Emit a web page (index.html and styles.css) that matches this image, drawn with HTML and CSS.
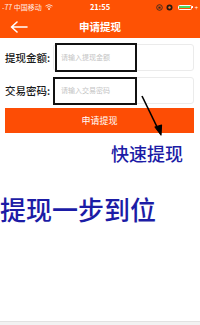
FILE: index.html
```html
<!DOCTYPE html>
<html>
<head>
<meta charset="utf-8">
<link rel="stylesheet" href="styles.css">
</head>
<body>
<div class="header">
  <div class="status">
    <div class="st-left">-77 中国移动 <svg class="wifi" width="8" height="6" viewBox="0 0 8 6"><path d="M0.5 2 Q4 -0.8 7.5 2" stroke="#fff" stroke-width="1" fill="none" opacity="0.85"/><path d="M1.8 3.4 Q4 1.6 6.2 3.4" stroke="#fff" stroke-width="1" fill="none" opacity="0.85"/><circle cx="4" cy="5" r="0.9" fill="#fff"/></svg></div>
    <div class="st-time">21:55</div>
    <div class="st-right">
      <svg width="7" height="7" viewBox="0 0 7 7"><circle cx="3.5" cy="3.5" r="2.8" fill="none" stroke="#3a2a20" stroke-width="0.9"/><rect x="2.4" y="2.6" width="2.2" height="2" fill="#3a2a20"/></svg>
      <svg width="7" height="7" viewBox="0 0 7 7"><circle cx="3.5" cy="3.5" r="3" fill="#2a1a10"/><circle cx="3.5" cy="3.5" r="1.2" fill="#ff6a20"/></svg>
      <div class="battery"><div class="bat-fill"></div></div><div class="bat-nub"></div>
      <span class="plus">+</span>
    </div>
  </div>
  <div class="nav">
    <svg class="back" width="18" height="12" viewBox="0 0 18 12"><path d="M17 6 H2 M7 1 L1.5 6 L7 11" stroke="#fff" stroke-width="1.6" fill="none" stroke-linecap="round" stroke-linejoin="round"/></svg>
    <div class="title">申请提现</div>
  </div>
</div>
<div class="form">
  <div class="row">
    <div class="label">提现金额:</div>
    <div class="input"><span class="ph">请输入提现金额</span><div class="mark"></div></div>
  </div>
  <div class="row">
    <div class="label">交易密码:</div>
    <div class="input"><span class="ph">请输入交易密码</span><div class="mark"></div></div>
  </div>
  <div class="btn">申请提现</div>
  <svg class="arrow" width="30" height="46" viewBox="0 0 30 46"><path d="M3 1 L20 36" stroke="#000" stroke-width="1.6"/><path d="M16 32 L22 40 L22.5 30 Z" fill="#000" stroke="#000" stroke-width="1.2" stroke-linejoin="round"/></svg>
  <div class="note1">快速提现</div>
</div>
<div class="note2">提现一步到位</div>
<div class="bottom"></div>
</body>
</html>
```
FILE: styles.css
```css
* { box-sizing: border-box; }
html, body { margin: 0; padding: 0; }
body {
  width: 200px; height: 325px; background: #fff; overflow: hidden;
  font-family: "Noto Sans CJK SC", "Noto Sans", sans-serif;
  display: flex; flex-direction: column; position: relative;
}
.header { background: #fe5204; height: 38px; display: flex; flex-direction: column; }
.status { height: 14px; display: flex; align-items: center; justify-content: space-between; padding: 0 2px 0 2px; color: #fff; font-size: 7px; position: relative; }
.st-left { display: flex; align-items: center; gap: 1px; opacity: 0.9; line-height: 1; }
.wifi { margin-left: 2px; }
.st-time { position: absolute; left: 0; right: 0; text-align: center; font-weight: bold; font-size: 7.5px; line-height: 14px; color: #fff; }
.st-right { display: flex; align-items: center; gap: 3px; }
.battery { width: 14px; height: 5px; border: 1px solid #fff; border-radius: 1.5px; padding: 0.5px; margin-left: 2px; }
.bat-fill { width: 100%; height: 100%; background: #4cd964; }
.bat-nub { width: 1px; height: 2px; background: #fff; margin-left: -3px; }
.plus { font-size: 6px; color: #fff; margin-left: -1px; }
.nav { flex: 1; display: flex; align-items: center; position: relative; padding-left: 10px; padding-top: 1px; }
.title { position: absolute; left: 0; right: 0; text-align: center; color: #fff; font-size: 10.5px; font-weight: bold; }
.form { padding: 3px 6px 0 5px; position: relative; }
.row { display: flex; align-items: center; height: 32px; }
.row + .row { margin-top: 1px; }
.label { width: 48px; font-size: 10.5px; color: #1a1a1a; white-space: nowrap; font-weight: 500; }
.input { flex: 1; height: 27px; border: 1px solid #ebebeb; border-radius: 3px; display: flex; align-items: center; padding-left: 7px; position: relative; }
.ph { font-size: 7px; color: #c4c4c4; }
.mark { position: absolute; left: 1px; top: -2px; width: 82px; height: 29px; border: 2px solid #111; }
.row + .row .mark { left: -1px; width: 84px; top: -1px; height: 28px; }
.btn { margin-top: 2px; height: 25px; background: #fd4d05; color: #fff; font-size: 9px; display: flex; align-items: center; justify-content: center; }
.arrow { position: absolute; left: 139px; top: 57px; }
.note1 { margin: 9px 0 0 106px; font-size: 18px; color: #1c1ca6; line-height: 22px; font-weight: 500; }
.note2 { margin: 30px 0 0 0; font-size: 26px; color: #1c1ca6; line-height: 30px; font-weight: 500; }
.bottom { position: absolute; left: 0; right: 0; bottom: 0; height: 4px; background: #f2f2f2; border-top: 1px solid #e2e2e2; }
```
